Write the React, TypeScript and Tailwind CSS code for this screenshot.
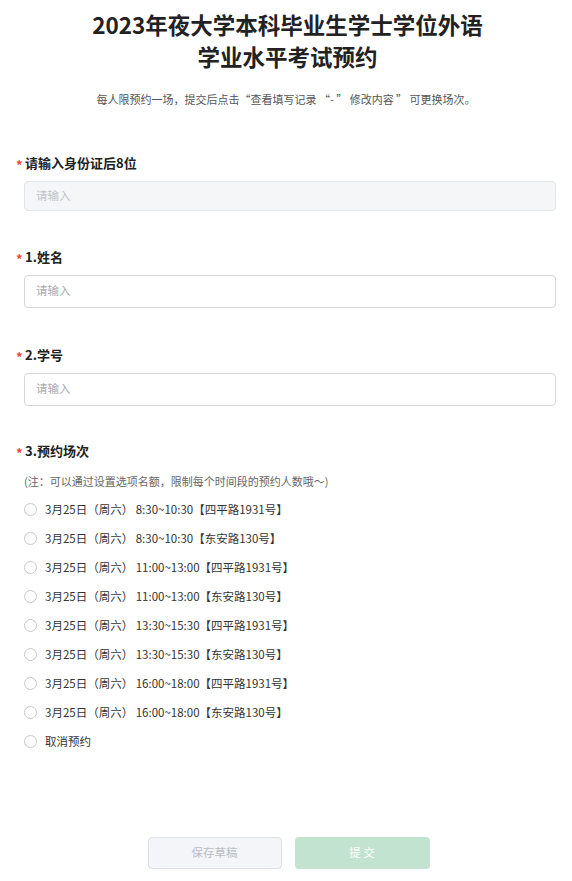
const slots = [
  "8:30~10:30【四平路1931号】",
  "8:30~10:30【东安路130号】",
  "11:00~13:00【四平路1931号】",
  "11:00~13:00【东安路130号】",
  "13:30~15:30【四平路1931号】",
  "13:30~15:30【东安路130号】",
  "16:00~18:00【四平路1931号】",
  "16:00~18:00【东安路130号】",
];

const Label = ({ text }: { text: string }) => (
  <div className="flex items-center h-[20px] text-[13px] font-bold text-[#222]">
    <span className="text-[#f0443a] w-[8px] mr-[1px] text-[13px] leading-none pt-[3px]">*</span>
    <span>{text}</span>
  </div>
);

const Radio = ({ text }: { text: string }) => (
  <label className="flex items-center h-[29px] text-[11.5px] text-[#333]">
    <span className="w-[13px] h-[13px] rounded-full border border-[#c8c8c8] bg-white mr-[8px] shrink-0" />
    <span>{text}</span>
  </label>
);

export default function App() {
  return (
    <div
      className="w-[572px] min-h-[881px] bg-white"
      style={{ fontFamily: '"Noto Sans CJK SC", "Noto Sans", sans-serif' }}
    >
      <div className="pt-[8px] text-center">
        <h1 className="text-[22.5px] leading-[32px] font-bold text-[#222] pl-[3px]">
          2023年夜大学本科毕业生学士学位外语
          <br />
          学业水平考试预约
        </h1>
        <p className="mt-[19px] text-[11px] text-[#555]">
          每人限预约一场，提交后点击“查看填写记录 “- ” 修改内容 ” 可更换场次。
        </p>
      </div>

      <div className="px-[16px] mt-[45px]">
        <Label text="请输入身份证后8位" />
        <div className="ml-[8px] mt-[8px] h-[30px] rounded-[4px] border border-[#e4e6ea] bg-[#f5f6f8] flex items-center px-[11px] text-[11.5px] text-[#c0c4cc]">
          请输入
        </div>

        <div className="mt-[36px]">
          <Label text="1.姓名" />
        </div>
        <div className="ml-[8px] mt-[8px] h-[33px] rounded-[4px] border border-[#d6d6d6] bg-white flex items-center px-[11px] text-[11.5px] text-[#a8abb2]">
          请输入
        </div>

        <div className="mt-[37px]">
          <Label text="2.学号" />
        </div>
        <div className="ml-[8px] mt-[8px] h-[33px] rounded-[4px] border border-[#d6d6d6] bg-white flex items-center px-[11px] text-[11.5px] text-[#a8abb2]">
          请输入
        </div>

        <div className="mt-[35px]">
          <Label text="3.预约场次" />
        </div>
        <p className="ml-[8px] mt-[12px] text-[11px] text-[#666]">
          (注：可以通过设置选项名额，限制每个时间段的预约人数哦～)
        </p>

        <div className="ml-[8px] mt-[6px] flex flex-col">
          {slots.map((s, i) => (
            <Radio key={i} text={`3月25日（周六） ${s}`} />
          ))}
          <Radio text="取消预约" />
        </div>
      </div>

      <div className="flex justify-center gap-[13px] mt-[81px] pl-[5px]">
        <button className="w-[134px] h-[32px] rounded-[4px] border border-[#dcdfe6] bg-[#f4f5f9] text-[11.5px] text-[#b8bcc4]">
          保存草稿
        </button>
        <button className="w-[135px] h-[32px] rounded-[4px] bg-[#c2e3d0] text-[11.5px] text-white">
          提 交
        </button>
      </div>
    </div>
  );
}
